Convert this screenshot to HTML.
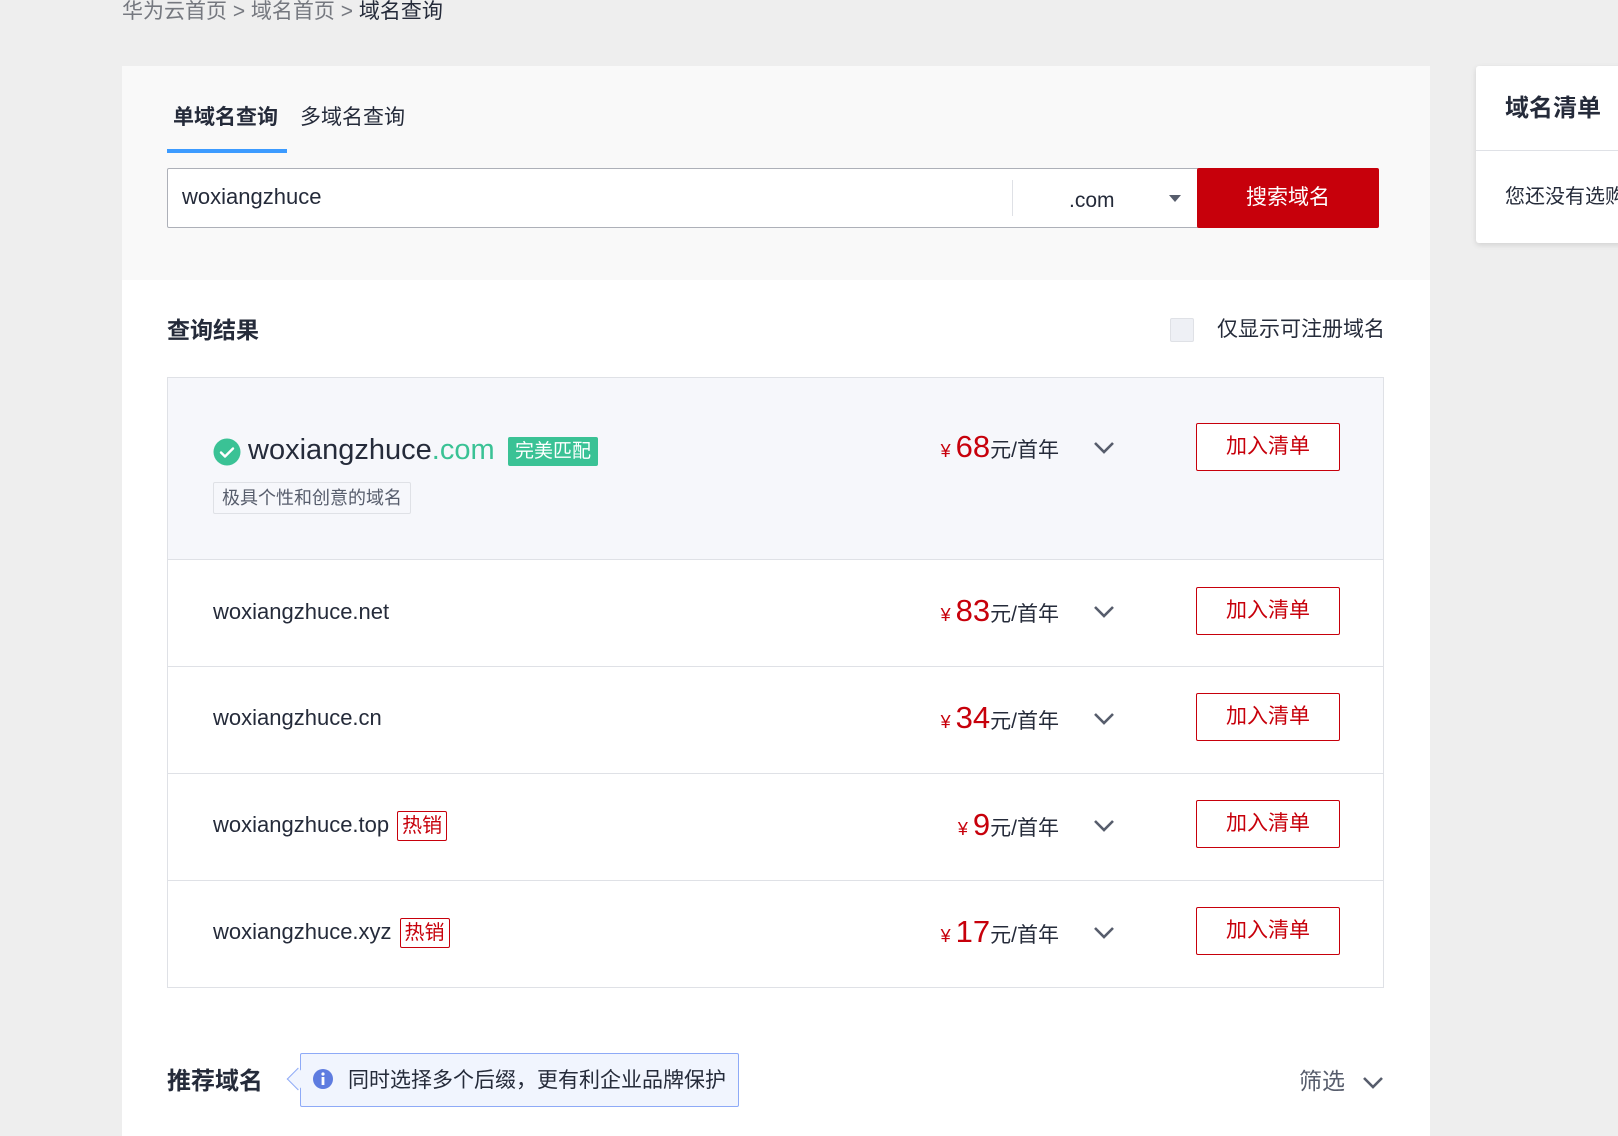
<!DOCTYPE html>
<html><head><meta charset="utf-8"><style>
*{margin:0;padding:0;box-sizing:border-box}
body{width:1618px;height:1126px;background:#eeeeee;font-family:"Liberation Sans","Noto Sans CJK SC",sans-serif;color:#252b3a;position:relative;overflow:hidden}
.a{position:absolute;white-space:nowrap}
.row{position:absolute;left:167px;width:1217px;border:1px solid #dfe1e6;border-top:none;background:#fff}
.btn{position:absolute;left:1028px;width:144px;height:48px;border:1px solid #c7000b;border-radius:2px;color:#c7000b;font-size:21px;text-align:center;line-height:46px;background:#fff}
.price{position:absolute;right:324px;color:#c7000b;font-size:21px}
.price i{font-style:normal;font-size:18px;margin-right:5px}
.price b{font-weight:normal;font-size:31px}
.price span{color:#252b3a}
.chev{position:absolute;left:925px}
.dn{position:absolute;left:45px;font-size:22px}
.hot{display:inline-block;border:1px solid #c7000b;color:#c7000b;border-radius:2px;font-size:20px;line-height:28px;padding:0 4px;margin-left:8px;vertical-align:middle}
</style></head><body>
<div class="a" style="left:122px;top:0;font-size:21px;color:#75787f;line-height:24px">华为云首页 &gt; 域名首页 &gt; <span style="color:#252b3a">域名查询</span></div>

<div class="a" style="left:122px;top:66px;width:1308px;height:1070px;background:#fff"></div>
<div class="a" style="left:122px;top:66px;width:1308px;height:214px;background:#f9f9f9"></div>
<div class="a" style="left:173px;top:104px;font-size:21px;font-weight:bold;line-height:28px">单域名查询</div>
<div class="a" style="left:300px;top:104px;font-size:21px;line-height:28px">多域名查询</div>
<div class="a" style="left:167px;top:149px;width:120px;height:4px;background:#3c9bff"></div>
<div class="a" style="left:167px;top:168px;width:1032px;height:60px;background:#fff;border:1px solid #adb0b8;border-radius:2px"></div>
<div class="a" style="left:182px;top:183px;font-size:22px;line-height:28px">woxiangzhuce</div>
<div class="a" style="left:1012px;top:180px;width:1px;height:36px;background:#dfe1e6"></div>
<div class="a" style="left:1069px;top:187px;font-size:21px;line-height:28px">.com</div>
<div class="a" style="left:1169px;top:195px;width:0;height:0;border-left:6px solid transparent;border-right:6px solid transparent;border-top:7px solid #575d6c"></div>
<div class="a" style="left:1197px;top:168px;width:182px;height:60px;background:#c7000b;border-radius:2px;color:#fff;font-size:21px;text-align:center;line-height:60px">搜索域名</div>

<div class="a" style="left:167px;top:315px;font-size:23px;font-weight:bold;line-height:30px">查询结果</div>
<div class="a" style="left:1170px;top:318px;width:24px;height:24px;border:1px solid #dfe1e6;border-radius:2px;background:#eef0f5"></div>
<div class="a" style="left:1217px;top:316px;font-size:21px;line-height:28px">仅显示可注册域名</div>

<div class="row" style="top:377px;height:183px;background:#f6f7fb;border-top:1px solid #dfe1e6">
 <svg class="a" style="left:45px;top:60px" width="28" height="28" viewBox="0 0 28 28"><circle cx="14" cy="14" r="13.5" fill="#3ac295"/><path d="M8 14.5l4 4 8-8" stroke="#fff" stroke-width="2.4" fill="none" stroke-linecap="round" stroke-linejoin="round"/></svg>
 <div class="a" style="left:80px;top:52px;font-size:29px;line-height:40px">woxiangzhuce<span style="color:#3ac295">.com</span></div>
 <div class="a" style="left:340px;top:59px;width:90px;height:29px;background:#3ac295;color:#fff;font-size:19px;line-height:29px;text-align:center;border-radius:2px">完美匹配</div>
 <div class="a" style="left:45px;top:104px;width:198px;height:32px;border:1px solid #dfe1e6;border-radius:2px;color:#575d6c;font-size:18px;line-height:30px;text-align:center">极具个性和创意的域名</div>
 <div class="price" style="top:51px"><i>¥</i><b>68</b><span>元/首年</span></div>
 <svg class="chev" style="top:63px" width="22" height="14" viewBox="0 0 22 14"><path d="M2 2l9 9 9-9" stroke="#575d6c" stroke-width="2.6" fill="none"/></svg>
 <div class="btn" style="top:45px">加入清单</div>
</div>
<div class="row" style="top:560px;height:107px">
 <div class="dn" style="top:39px">woxiangzhuce.net</div>
 <div class="price" style="top:33px"><i>¥</i><b>83</b><span>元/首年</span></div>
 <svg class="chev" style="top:45px" width="22" height="14" viewBox="0 0 22 14"><path d="M2 2l9 9 9-9" stroke="#575d6c" stroke-width="2.6" fill="none"/></svg>
 <div class="btn" style="top:27px">加入清单</div>
</div>
<div class="row" style="top:667px;height:107px">
 <div class="dn" style="top:38px">woxiangzhuce.cn</div>
 <div class="price" style="top:33px"><i>¥</i><b>34</b><span>元/首年</span></div>
 <svg class="chev" style="top:45px" width="22" height="14" viewBox="0 0 22 14"><path d="M2 2l9 9 9-9" stroke="#575d6c" stroke-width="2.6" fill="none"/></svg>
 <div class="btn" style="top:26px">加入清单</div>
</div>
<div class="row" style="top:774px;height:107px">
 <div class="dn" style="top:37px">woxiangzhuce.top<span class="hot">热销</span></div>
 <div class="price" style="top:33px"><i>¥</i><b>9</b><span>元/首年</span></div>
 <svg class="chev" style="top:45px" width="22" height="14" viewBox="0 0 22 14"><path d="M2 2l9 9 9-9" stroke="#575d6c" stroke-width="2.6" fill="none"/></svg>
 <div class="btn" style="top:26px">加入清单</div>
</div>
<div class="row" style="top:881px;height:107px">
 <div class="dn" style="top:37px">woxiangzhuce.xyz<span class="hot">热销</span></div>
 <div class="price" style="top:33px"><i>¥</i><b>17</b><span>元/首年</span></div>
 <svg class="chev" style="top:45px" width="22" height="14" viewBox="0 0 22 14"><path d="M2 2l9 9 9-9" stroke="#575d6c" stroke-width="2.6" fill="none"/></svg>
 <div class="btn" style="top:26px">加入清单</div>
</div>

<div class="a" style="left:167px;top:1066px;font-size:24px;font-weight:bold;line-height:32px">推荐域名</div>
<div class="a" style="left:300px;top:1053px;width:439px;height:54px;background:#f1f5fe;border:1px solid #8eaaf7;border-radius:2px"></div>
<div class="a" style="left:290px;top:1071px;width:16px;height:16px;background:#f1f5fe;border-left:1px solid #8eaaf7;border-bottom:1px solid #8eaaf7;transform:rotate(45deg)"></div>
<svg class="a" style="left:312px;top:1068px" width="22" height="22" viewBox="0 0 22 22"><circle cx="11" cy="11" r="10" fill="#5e7ce0"/><rect x="9.6" y="9" width="2.8" height="8" fill="#fff"/><circle cx="11" cy="6" r="1.6" fill="#fff"/></svg>
<div class="a" style="left:348px;top:1067px;font-size:21px;line-height:28px">同时选择多个后缀，更有利企业品牌保护</div>
<div class="a" style="left:1299px;top:1066px;font-size:23px;line-height:30px;color:#575d6c">筛选</div>
<svg class="a" style="left:1362px;top:1076px" width="22" height="14" viewBox="0 0 22 14"><path d="M2 2l9 9 9-9" stroke="#575d6c" stroke-width="2.6" fill="none"/></svg>

<div class="a" style="left:1476px;top:66px;width:160px;height:177px;background:#fff;border-radius:3px;box-shadow:0 2px 6px rgba(0,0,0,.12)"></div>
<div class="a" style="left:1476px;top:150px;width:160px;height:1px;background:#dfe1e6"></div>
<div class="a" style="left:1505px;top:93px;font-size:24px;font-weight:bold;line-height:32px">域名清单</div>
<div class="a" style="left:1505px;top:183px;font-size:20px;line-height:28px">您还没有选购</div>
</body></html>
